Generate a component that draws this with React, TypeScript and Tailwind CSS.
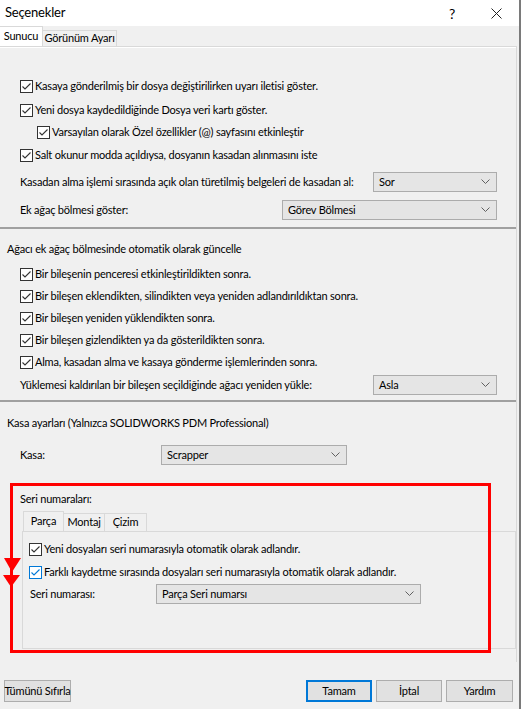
import React from 'react';

const font = { fontFamily: 'Lato, "Noto Sans", sans-serif' };

const Check = ({ focus }: { focus?: boolean }) => (
  <span
    className={`w-[13px] h-[13px] border bg-white flex items-center justify-center shrink-0 ${
      focus ? 'border-[#0078d7]' : 'border-[#333333]'
    }`}
  >
    <svg width="11" height="11" viewBox="0 0 11 11">
      <polyline points="1.5,5.5 4,8 9.5,2.5" fill="none" stroke={focus ? '#0078d7' : '#333333'} strokeWidth="1.1" />
    </svg>
  </span>
);

const CheckRow = ({ label, focus, className = '' }: { label: string; focus?: boolean; className?: string }) => (
  <div className={`flex items-center gap-[2px] h-[22px] ${className}`}>
    <Check focus={focus} />
    <span className="whitespace-nowrap">{label}</span>
  </div>
);

const Select = ({ value, className = '' }: { value: string; className?: string }) => (
  <div
    className={`h-[20px] bg-[#e5e5e5] border border-[#acacac] flex items-center justify-between pl-[5px] pr-[6px] shrink-0 ${className}`}
  >
    <span className="whitespace-nowrap">{value}</span>
    <svg width="9" height="6" viewBox="0 0 9 6">
      <polyline points="0.5,0.5 4.5,4.5 8.5,0.5" fill="none" stroke="#606060" strokeWidth="1" />
    </svg>
  </div>
);

const Button = ({ label, primary, className = '' }: { label: string; primary?: boolean; className?: string }) => (
  <div
    className={`h-[22px] flex items-center justify-center whitespace-nowrap bg-[#e1e1e1] ${
      primary ? 'border-2 border-[#0078d7]' : 'border border-[#adadad]'
    } ${className}`}
  >
    {label}
  </div>
);

export default function App() {
  return (
    <div
      className="w-[521px] h-[709px] bg-[#f0f0f0] text-[11px] tracking-[-0.2px] text-black flex flex-col relative overflow-hidden border-r-2 border-[#7a7a7a]"
      style={font}
    >
      {/* Title bar */}
      <div className="h-[26px] bg-white flex items-center justify-between shrink-0">
        <span className="pl-[5px] text-[13px]">Seçenekler</span>
        <div className="flex items-center gap-[36px] pr-[17px] text-[14px]">
          <span>?</span>
          <svg width="11" height="11" viewBox="0 0 11 11">
            <path d="M0.5 0.5 L10.5 10.5 M10.5 0.5 L0.5 10.5" stroke="#222" strokeWidth="1" />
          </svg>
        </div>
      </div>

      {/* Tabs */}
      <div className="h-[20px] flex items-end shrink-0">
        <div className="h-[20px] w-[43px] bg-white border-t border-r border-[#d9d9d9] flex items-center justify-center">
          Sunucu
        </div>
        <div className="h-[16px] w-[74px] border-t border-r border-[#d9d9d9] flex items-center justify-center whitespace-nowrap">
          Görünüm Ayarı
        </div>
      </div>

      {/* Panel */}
      <div className="flex-1 border-t border-[#d9d9d9] mr-[2px] border-r flex flex-col">
        <div className="h-[1px] bg-white" />

        {/* Section 1 */}
        <div className="h-[179px] pl-[20px] pr-[19px] pt-[27px] shrink-0">
          <CheckRow label="Kasaya gönderilmiş bir dosya değiştirilirken uyarı iletisi göster." />
          <CheckRow className="mt-[2px]" label="Yeni dosya kaydedildiğinde Dosya veri kartı göster." />
          <CheckRow className="ml-[17px]" label="Varsayılan olarak Özel özellikler (@) sayfasını etkinleştir" />
          <CheckRow className="mt-[1px]" label="Salt okunur modda açıldıysa, dosyanın kasadan alınmasını iste" />
          <div className="flex items-center justify-between mt-[6px] h-[20px]">
            <span className="whitespace-nowrap">Kasadan alma işlemi sırasında açık olan türetilmiş belgeleri de kasadan al:</span>
            <Select value="Sor" className="w-[124px]" />
          </div>
          <div className="flex items-center justify-between mt-[8px] h-[20px]">
            <span>Ek ağaç bölmesi göster:</span>
            <Select value="Görev Bölmesi" className="w-[215px]" />
          </div>
        </div>

        <div className="h-[2px] bg-[#a0a0a0] shrink-0" />

        {/* Section 2 */}
        <div className="h-[171px] pl-[20px] pr-[19px] pt-[9px] shrink-0">
          <div className="h-[22px] flex items-center -ml-[13px]">Ağacı ek ağaç bölmesinde otomatik olarak güncelle</div>
          <CheckRow className="mt-[3px] h-[21.5px]" label="Bir bileşenin penceresi etkinleştirildikten sonra." />
          <CheckRow className="h-[21.5px]" label="Bir bileşen eklendikten, silindikten veya yeniden adlandırıldıktan sonra." />
          <CheckRow className="h-[21.5px]" label="Bir bileşen yeniden yüklendikten sonra." />
          <CheckRow className="h-[21.5px]" label="Bir bileşen gizlendikten ya da gösterildikten sonra." />
          <CheckRow className="h-[21.5px]" label="Alma, kasadan alma ve kasaya gönderme işlemlerinden sonra." />
          <div className="flex items-center justify-between mt-[2px] h-[20px]">
            <span className="whitespace-nowrap">Yüklemesi kaldırılan bir bileşen seçildiğinde ağacı yeniden yükle:</span>
            <Select value="Asla" className="w-[124px]" />
          </div>
        </div>

        <div className="h-[2px] bg-[#a0a0a0] shrink-0" />

        {/* Section 3 */}
        <div className="flex-1 pl-[7px] pt-[10px]">
          <div className="h-[22px] flex items-center">Kasa ayarları (Yalnızca SOLIDWORKS PDM Professional)</div>
          <div className="flex items-center mt-[11px] h-[20px] pl-[13px]">
            <span className="w-[141px]">Kasa:</span>
            <Select value="Scrapper" className="w-[186px]" />
          </div>
          <div className="pl-[13px] pt-[23px]">
            <div className="h-[22px] flex items-center">Seri numaraları:</div>
            <div className="flex items-end h-[20px] mt-[1px] pl-[3px]">
              <div className="h-[20px] w-[41px] bg-[#f0f0f0] border-t border-l border-r border-[#d9d9d9] flex items-center justify-center">
                Parça
              </div>
              <div className="h-[18px] w-[41px] border-t border-r border-[#d9d9d9] flex items-center justify-center">Montaj</div>
              <div className="h-[18px] w-[42px] border-t border-r border-[#d9d9d9] flex items-center justify-center">Çizim</div>
            </div>
            <div className="ml-[2px] h-[118px] border border-[#d9d9d9] pl-[6px] pt-[6px]">
              <CheckRow label="Yeni dosyaları seri numarasıyla otomatik olarak adlandır." />
              <CheckRow className="mt-[1px]" focus label="Farklı kaydetme sırasında dosyaları seri numarasıyla otomatik olarak adlandır." />
              <div className="flex items-center h-[20px] mt-[1px] pl-[1px]">
                <span className="w-[126px]">Seri numarası:</span>
                <Select value="Parça Seri numarsı" className="w-[265px]" />
              </div>
            </div>
          </div>
        </div>
      </div>

      {/* Buttons */}
      <div className="h-[47px] shrink-0 flex items-start pt-[18px] pl-[4px] pr-[6px]">
        <Button label="Tümünü Sıfırla" className="w-[67px]" />
        <div className="flex-1" />
        <Button label="Tamam" primary className="w-[66px]" />
        <Button label="İptal" className="w-[66px] ml-[4px]" />
        <Button label="Yardım" className="w-[67px] ml-[4px]" />
      </div>

      {/* Red annotation overlay */}
      <div className="absolute left-[10px] top-[483px] w-[481px] h-[170px] border-[3px] border-[#ff0000] pointer-events-none" />
      <svg className="absolute left-0 top-[550px] pointer-events-none" width="30" height="50" viewBox="0 0 30 50">
        <polygon points="4,8 21,8 12,22" fill="#ff0000" />
        <line x1="11" y1="0" x2="12" y2="22" stroke="#ff0000" strokeWidth="2" />
        <polygon points="3,25 20,25 11,37" fill="#ff0000" />
        <line x1="11" y1="22" x2="11" y2="44" stroke="#ff0000" strokeWidth="2" />
      </svg>
    </div>
  );
}
